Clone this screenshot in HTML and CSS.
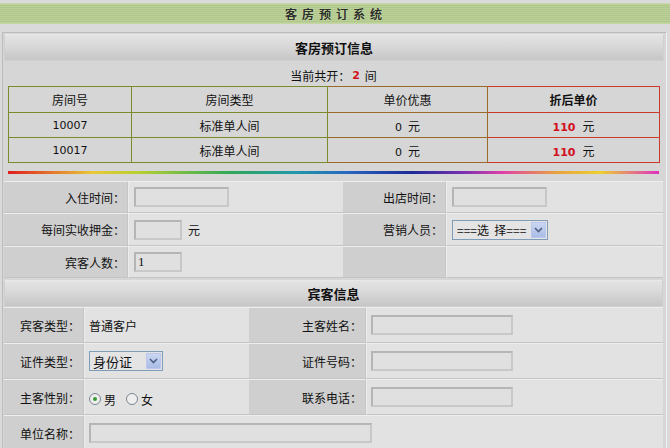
FILE: index.html
```html
<!DOCTYPE html>
<html lang="zh-CN">
<head>
<meta charset="utf-8">
<title>客房预订系统</title>
<link rel="stylesheet" href="styles.css">
</head>
<body>
<div class="banner"><span>客房预订系统</span></div>
<div class="panel">
  <div class="phead">客房预订信息</div>
  <div class="count">当前共开：<b>2</b> 间</div>
  <table class="rooms">
    <tr>
      <th class="c1">房间号</th>
      <th class="c2">房间类型</th>
      <th class="c3">单价优惠</th>
      <th class="c4 strong">折后单价</th>
    </tr>
    <tr>
      <td class="c1 num">10007</td>
      <td class="c2">标准单人间</td>
      <td class="c3"><span class="num zero">0</span>元</td>
      <td class="c4"><b class="price">110</b>元</td>
    </tr>
    <tr>
      <td class="c1 num">10017</td>
      <td class="c2">标准单人间</td>
      <td class="c3"><span class="num zero">0</span>元</td>
      <td class="c4"><b class="price">110</b>元</td>
    </tr>
  </table>
  <div class="rainbow"></div>

  <div class="form form1">
    <div class="lab">入住时间：</div>
    <div class="val"><span class="inp w94"></span></div>
    <div class="lab">出店时间：</div>
    <div class="val"><span class="inp w94"></span></div>

    <div class="lab">每间实收押金：</div>
    <div class="val"><span class="inp w47"></span><span class="unit">元</span></div>
    <div class="lab">营销人员：</div>
    <div class="val">
      <span class="sel w95"><span class="seltxt">===选&nbsp;&nbsp;择===</span><span class="selbtn"><svg width="9" height="6" viewBox="0 0 9 6"><path d="M1 1 L4.5 4.5 L8 1" fill="none" stroke="#4d6185" stroke-width="1.6"/></svg></span></span>
    </div>

    <div class="lab">宾客人数：</div>
    <div class="val"><span class="inp w47 filled">1</span></div>
    <div class="lab"></div>
    <div class="val"></div>
  </div>

  <div class="phead phead2">宾客信息</div>

  <div class="form form2">
    <div class="lab">宾客类型：</div>
    <div class="val">普通客户</div>
    <div class="lab">主客姓名：</div>
    <div class="val"><span class="inp w141"></span></div>

    <div class="lab">证件类型：</div>
    <div class="val">
      <span class="sel w73"><span class="seltxt big">身份证</span><span class="selbtn"><svg width="9" height="6" viewBox="0 0 9 6"><path d="M1 1 L4.5 4.5 L8 1" fill="none" stroke="#4d6185" stroke-width="1.6"/></svg></span></span>
    </div>
    <div class="lab">证件号码：</div>
    <div class="val"><span class="inp w141"></span></div>

    <div class="lab">主客性别：</div>
    <div class="val radios">
      <span class="radio on"></span><span class="rlab">男</span>
      <span class="radio"></span><span class="rlab">女</span>
    </div>
    <div class="lab">联系电话：</div>
    <div class="val"><span class="inp w141"></span></div>

    <div class="lab">单位名称：</div>
    <div class="val span3"><span class="inp w282"></span></div>
  </div>
</div>
</body>
</html>
```

FILE: styles.css
```css
* { box-sizing: border-box; }
html, body { margin: 0; padding: 0; }
body {
  width: 670px;
  height: 448px;
  overflow: hidden;
  background: #dadada;
  font-family: "Noto Sans CJK SC", "DejaVu Sans", sans-serif;
  font-size: 12px;
  color: #111;
}
.banner {
  margin-top: 3px;
  height: 21px;
  background: repeating-linear-gradient(to bottom, #bcd09a 0px, #bcd09a 1px, #b0c68b 1px, #b0c68b 2px);
  border-top: 1px solid #c8d8ac;
  border-bottom: 1px solid #c4d6a4;
  display: flex;
  align-items: center;
  justify-content: center;
}
.banner span {
  letter-spacing: 5px;
  font-size: 12px;
  color: #2b2b2b;
  margin-left: 2px;
  text-shadow: 0 0 0 #2b2b2b;
}
.panel {
  margin: 8px 3px 0 2px;
  border: 1px solid #bcbcbc;
  border-right-color: #f0f0f0;
  background: #d6d6d6;
  height: 420px;
  padding-right: 2px;
}
.phead {
  margin: 1px 0 0 1px;
  height: 27px;
  border: 1px solid #cfcfcf;
  border-top-color: #e8e8e8;
  background: linear-gradient(to bottom, #e4e4e4 0%, #d8d8d8 45%, #c6c6c6 100%);
  display: flex;
  align-items: center;
  justify-content: center;
  font-weight: bold;
  font-size: 13px;
  color: #111;
}
.count {
  height: 25px;
  display: flex;
  align-items: center;
  justify-content: center;
  padding-top: 3px;
}
.count b {
  color: #d2101e;
  font-family: "DejaVu Sans", sans-serif;
  font-size: 11px;
  margin: 0 5px 0 2px;
}
.rooms {
  margin-left: 5px;
  width: 651px;
  border-collapse: collapse;
  table-layout: fixed;
}
.rooms th, .rooms td {
  height: 25px;
  text-align: center;
  font-weight: normal;
  border: 1px solid #7b8a2a;
  padding: 0;
}
.rooms tr:first-child th { height: 26px; }
.rooms .c1 { width: 123px; }
.rooms .c2 { width: 196px; }
.rooms .c3 { width: 160px; border-color: #9a6a28; border-left-color: #7b8a2a; }
.rooms .c4 { width: 172px; border-color: #c83a2c; border-left-color: #8e4424; }
.rooms th.strong { font-weight: bold; }
.num { font-family: "DejaVu Sans", sans-serif; font-size: 11px; }
.zero { margin-right: 6px; }
.price {
  color: #d2101e;
  font-family: "DejaVu Sans", sans-serif;
  font-size: 11px;
  margin-right: 7px;
}
.rainbow {
  margin: 8px 0 0 5px;
  width: 651px;
  height: 3px;
  background: linear-gradient(to right, #e01e1e 0%, #e8c838 13%, #b8d030 20%, #30a858 34%, #2098a8 44%, #2868c0 52%, #1c2a98 62%, #7a30b0 70%, #e040a8 76%, #e8a040 84%, #ecd030 91%, #e030c0 100%);
}
.form {
  display: grid;
  margin-left: 1px;
  width: 659px;
}
.form1 {
  margin-top: 7px;
  grid-template-columns: 124px 215px 103px 217px;
  grid-template-rows: 32px 33px 32px;
}
.form2 {
  grid-template-columns: 80px 165px 117px 297px;
  grid-template-rows: 36px 36px 36px 36px;
}
.lab, .val {
  display: flex;
  align-items: center;
  border-top: 1px solid #eeeeee;
  border-bottom: 1px solid #c4c4c4;
}
.lab {
  background: #cfcfcf;
  justify-content: flex-end;
  padding-right: 2px;
  border-right: 1px solid #c6c6c6;
}
.val {
  background: #e2e2e2;
  padding-left: 5px;
  border-left: 1px solid #ececec;
}
.form2 .lab { padding-right: 3px; }
.form2 .val { padding-left: 4px; }
.span3 { grid-column: 2 / 5; }
.phead2 { margin: 2px 0 0 1px; width: 659px; }
.inp {
  display: inline-block;
  height: 20px;
  background: #e0e0e0;
  border: 2px solid #b5b5b5;
  border-right-color: #c8c8c8;
  border-bottom-color: #c8c8c8;
  font-family: "Liberation Serif", serif;
  font-size: 13px;
  line-height: 16px;
  padding-left: 2px;
  color: #111;
}
.w94 { width: 95px; }
.w47 { width: 48px; }
.w141 { width: 142px; }
.w282 { width: 283px; }
.unit { margin-left: 6px; font-size: 12px; }
.sel {
  display: inline-flex;
  align-items: center;
  height: 20px;
  border: 1px solid #7f9db9;
  background: #e4e4e4;
  padding: 1px;
}
.w95 { width: 96px; }
.w73 { width: 74px; }
.seltxt {
  flex: 1;
  padding-left: 3px;
  font-size: 12px;
  white-space: nowrap;
}
.seltxt.big { font-size: 13px; padding-left: 2px; }
.selbtn {
  width: 15px;
  height: 16px;
  background: linear-gradient(to bottom, #cad6f2, #aabce6);
  border: 1px solid #b9c8ec;
  display: flex;
  align-items: center;
  justify-content: center;
}
.radios { padding-left: 11px; padding-top: 4px; }
.radio {
  display: inline-block;
  width: 12px;
  height: 12px;
  border-radius: 50%;
  border: 1px solid #7d8690;
  background: #eeeeee;
  position: relative;
}
.radio.on::after {
  content: "";
  position: absolute;
  left: 3px;
  top: 3px;
  width: 4px;
  height: 4px;
  border-radius: 50%;
  background: #3a9a3a;
}
.rlab { margin: 0 10px 0 3px; font-size: 12px; }
```
